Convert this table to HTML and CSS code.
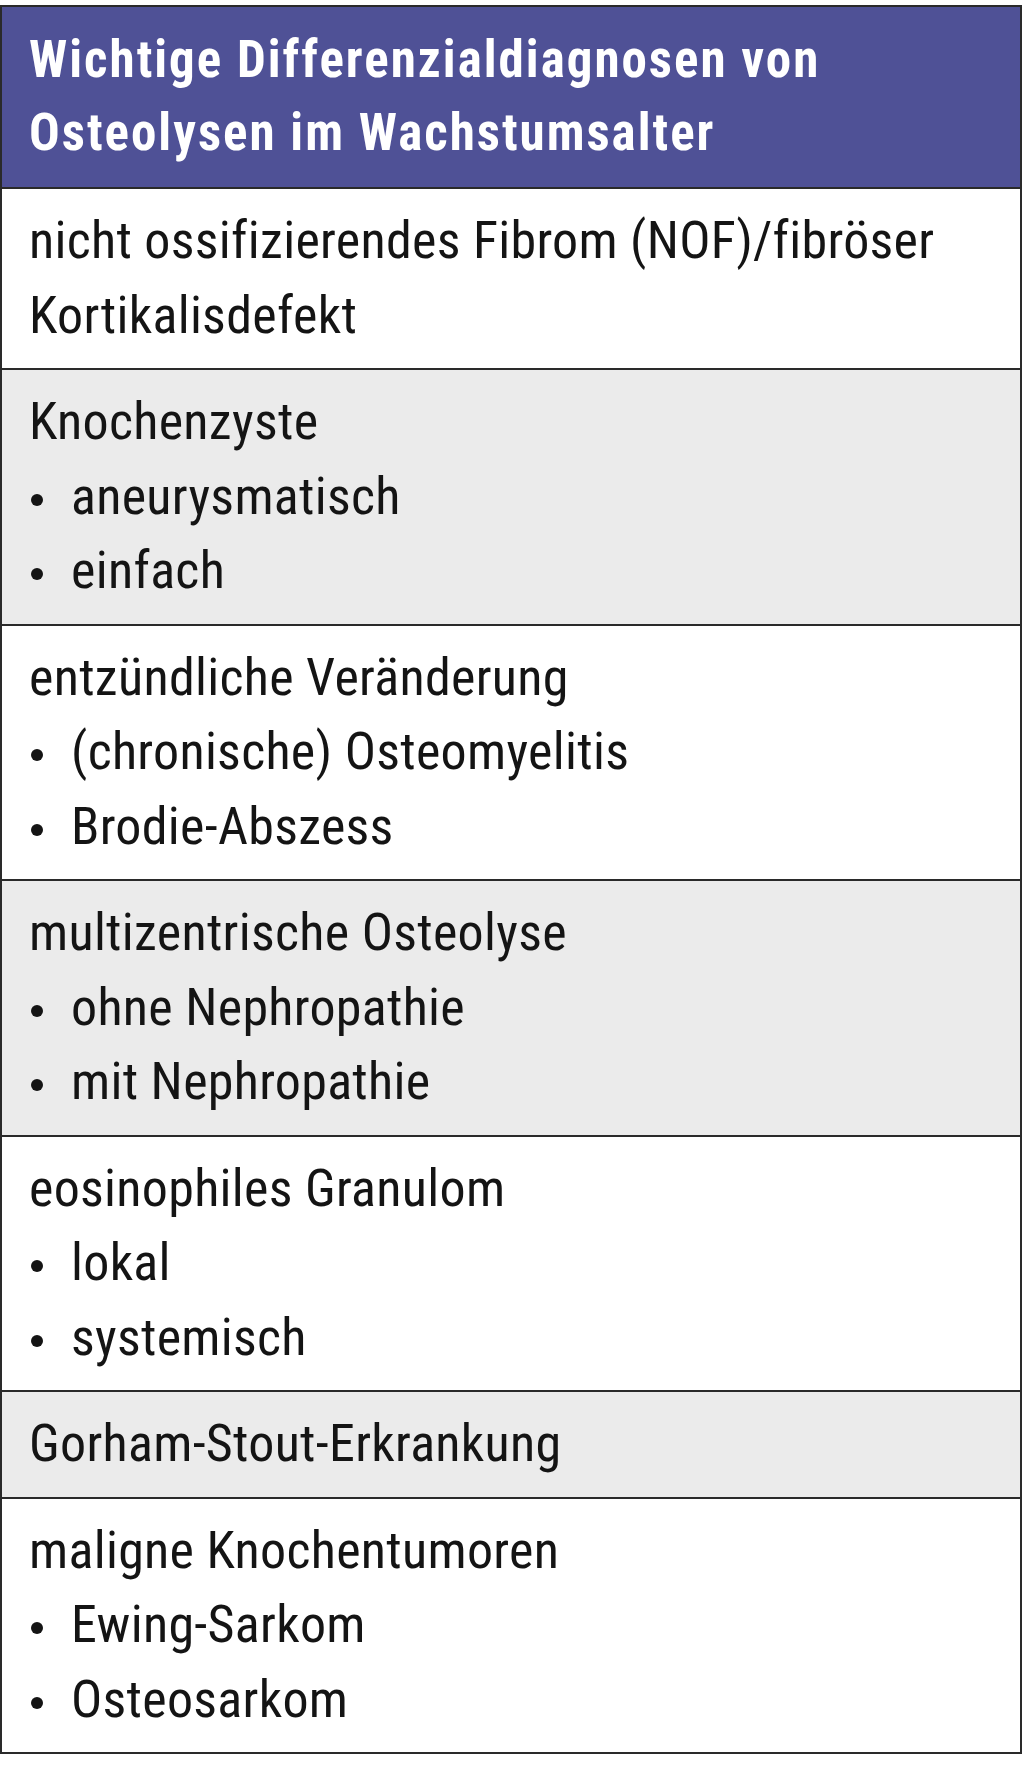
FILE: index.html
```html
<!DOCTYPE html>
<html lang="de">
<head>
<meta charset="utf-8">
<title>Wichtige Differenzialdiagnosen von Osteolysen im Wachstumsalter</title>
<link rel="stylesheet" href="styles.css">
</head>
<body>
<div class="box">
  <div class="head">Wichtige Differenzialdiagnosen von Osteolysen im Wachstumsalter</div>
  <div class="row">nicht ossifizierendes Fibrom (NOF)/fibröser Kortikalisdefekt</div>
  <div class="row alt">
    <div>Knochenzyste</div>
    <ul class="list"><li>aneurysmatisch</li><li>einfach</li></ul>
  </div>
  <div class="row">
    <div>entzündliche Veränderung</div>
    <ul class="list"><li>(chronische) Osteomyelitis</li><li>Brodie-Abszess</li></ul>
  </div>
  <div class="row alt">
    <div>multizentrische Osteolyse</div>
    <ul class="list"><li>ohne Nephropathie</li><li>mit Nephropathie</li></ul>
  </div>
  <div class="row">
    <div>eosinophiles Granulom</div>
    <ul class="list"><li>lokal</li><li>systemisch</li></ul>
  </div>
  <div class="row alt">Gorham-Stout-Erkrankung</div>
  <div class="row last">
    <div>maligne Knochentumoren</div>
    <ul class="list"><li>Ewing-Sarkom</li><li>Osteosarkom</li></ul>
  </div>
</div>
</body>
</html>
```
FILE: styles.css
```css
html,body{margin:0;padding:0;background:#fff;}
body{padding-top:5px;}
.box{
  width:1022px;
  box-sizing:border-box;
  border:2px solid #2a2a2a;
  font-family:"Roboto Condensed","Roboto","Liberation Sans",sans-serif;
  color:#141414;
}
.head{
  background:#4f5196;
  color:#fff;
  font-weight:700;
  font-size:51px;
  line-height:73px;
  letter-spacing:2px;
  padding:16px 27px 18px;
  border-bottom:2px solid #2a2a2a;
}
.row{
  font-size:52px;
  line-height:74.5px;
  letter-spacing:0.3px;
  padding:15px 27px 15px;
  border-bottom:2px solid #2a2a2a;
  background:#fff;
}
.row.last{border-bottom:none;}
.row.alt{background:#ebebeb;}
.list{list-style:none;margin:0;padding:0;}
.list li{display:flex;align-items:flex-start;}
.list li::before{
  content:"";
  flex:0 0 12px;
  height:12px;
  margin-top:34px;
  margin-left:2px;
  margin-right:28px;
  border-radius:50%;
  background:#141414;
}
```
